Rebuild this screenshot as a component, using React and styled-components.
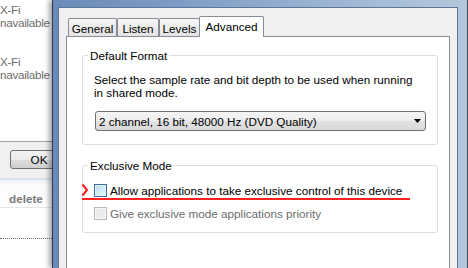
import styled, { createGlobalStyle } from "styled-components";

const GlobalStyle = createGlobalStyle`
  html, body {
    margin: 0;
    padding: 0;
    background: #fff;
  }
  body {
    font-family: "Segoe UI", "Liberation Sans", Arial, sans-serif;
    font-size: 11.7px;
    color: #000;
  }
`;

const Screen = styled.div`
  width: 468px;
  height: 268px;
  overflow: hidden;
  display: flex;
`;

// the window that sits behind the dialog, only a strip of it shows
const BackWindow = styled.div`
  width: 52px;
  flex: none;
  display: flex;
  flex-direction: column;
  background: #fff;
  overflow: hidden;
  color: #6d6d6d;
  line-height: 13px;
`;

const DeviceList = styled.div`
  height: 142px;
  box-sizing: border-box;
  padding-top: 3px;
  border-bottom: 1px solid #a0a0a0;
`;

const Device = styled.div`
  height: 52px;
  white-space: nowrap;
  letter-spacing: -0.3px;
`;

const ButtonBar = styled.div`
  height: 38px;
  box-sizing: border-box;
  padding: 8px 0 0 10px;
  background: #f0f0f0;
  border-bottom: 2px solid #d3dfec;
`;

const Button = styled.div`
  width: 58px;
  height: 19px;
  box-sizing: border-box;
  border: 1px solid #707070;
  border-radius: 3px;
  background: linear-gradient(#f2f2f2, #ebebeb 50%, #dddddd 51%, #cfcfcf);
  color: #000;
  display: flex;
  align-items: center;
  justify-content: center;
`;

const HeaderRow = styled.div`
  height: 28px;
  box-sizing: border-box;
  padding: 12px 0 0 9px;
  background: linear-gradient(#eef2f6, #fbfbfb 20%, #fff);
  border-bottom: 1px solid #e6e6e6;
  font-weight: bold;
  color: #7b7b7b;
`;

const DottedRow = styled.div`
  height: 31px;
  box-sizing: border-box;
  border-bottom: 1px dotted #6a6a6a;
`;

// aero glass frame of the dialog
const DialogFrame = styled.div`
  flex: 1;
  display: flex;
  flex-direction: column;
  position: relative;
  z-index: 1;
  padding: 7px 9px 0 5px;
  border-left: 1px solid #2b3a4d;
  border-right: 1px solid #3c4b5e;
  background: linear-gradient(to right, #6a8bb8 0%, #819fc7 35%, #a3bad6 75%, #b5c7dc 100%);
  box-shadow: -3px 0 5px rgba(0, 0, 0, 0.35);
`;

const DialogBody = styled.div`
  flex: 1;
  display: flex;
  flex-direction: column;
  padding: 0 7px;
  background: #f0f0f0;
  border: 1px solid #5d7596;
  border-bottom: none;
`;

const TabStrip = styled.div`
  height: 29px;
  box-sizing: border-box;
  display: flex;
  align-items: flex-end;
  padding-left: 2px;
  margin-bottom: -1px;
  position: relative;
  z-index: 1;
`;

const Tab = styled.div`
  box-sizing: border-box;
  width: ${(p) => p.$w}px;
  height: ${(p) => (p.$active ? 21 : 18)}px;
  margin-bottom: ${(p) => (p.$active ? 0 : 1)}px;
  margin-left: ${(p) => (p.$active ? -1 : 0)}px;
  padding: ${(p) => (p.$active ? "0 0 2px" : "1px 0 0")};
  border: 1px solid #898c95;
  border-bottom: none;
  border-radius: 2px 2px 0 0;
  background: ${(p) =>
    p.$active ? "#fff" : "linear-gradient(#f7f7f7, #ececec 50%, #e4e4e4)"};
  display: flex;
  align-items: center;
  justify-content: center;
  white-space: nowrap;
`;

const TabPanel = styled.div`
  flex: 1;
  background: #fff;
  border: 1px solid #898c95;
  border-bottom: none;
  padding: 0 11px 0 15px;
`;

const Group = styled.fieldset`
  margin: ${(p) => p.$top}px 0 0;
  padding: ${(p) => p.$pad};
  border: 1px solid #d5dfe5;
  border-radius: 3px;
  min-width: 0;
  line-height: 13px;
`;

const GroupTitle = styled.legend`
  padding: 0 2px;
  margin-left: -6px;
  line-height: 13px;
`;

const Hint = styled.div`
  white-space: nowrap;
`;

const Select = styled.div`
  height: 20px;
  box-sizing: border-box;
  margin: 12px 0 0 1px;
  padding: 0 4px 0 3px;
  border: 1px solid #707070;
  border-radius: 3px;
  background: linear-gradient(#f5f5f5, #ededed 50%, #e2e2e2 51%, #d9d9d9);
  display: flex;
  align-items: center;
  justify-content: space-between;
  white-space: nowrap;
`;

const Rows = styled.div`
  display: flex;
  flex-direction: column;
  gap: 10px;
`;

const CheckRow = styled.div`
  position: relative;
  height: 13px;
  display: flex;
  align-items: center;
  gap: 3px;
  white-space: nowrap;
  color: ${(p) => (p.$disabled ? "#6d6d6d" : "#000")};
`;

const Box = styled.span`
  width: 13px;
  height: 13px;
  box-sizing: border-box;
  flex: none;
  border: 1px solid ${(p) => (p.$disabled ? "#b8b8b8" : "#3d6f9e")};
  box-shadow: inset 0 0 0 1px ${(p) => (p.$disabled ? "#f7f7f7" : "#def2fc")};
  background: ${(p) =>
    p.$disabled
      ? "#ececec"
      : "linear-gradient(135deg, #b9dcf3, #d6ecfa 60%, #eaf6fd)"};
`;

// red pen marks drawn on top of the screenshot
const Markup = styled.svg`
  position: absolute;
  left: -13px;
  top: -2px;
  overflow: visible;
  pointer-events: none;
`;

export default function App() {
  return (
    <Screen>
      <GlobalStyle />
      <BackWindow>
        <DeviceList>
          <Device>
            <div>X-Fi</div>
            <div>navailable</div>
          </Device>
          <Device>
            <div>X-Fi</div>
            <div>navailable</div>
          </Device>
        </DeviceList>
        <ButtonBar>
          <Button>OK</Button>
        </ButtonBar>
        <HeaderRow>delete</HeaderRow>
        <DottedRow />
      </BackWindow>

      <DialogFrame>
        <DialogBody>
          <TabStrip>
            <Tab $w={49}>General</Tab>
            <Tab $w={42}>Listen</Tab>
            <Tab $w={41}>Levels</Tab>
            <Tab $w={65} $active>
              Advanced
            </Tab>
          </TabStrip>
          <TabPanel>
            <Group $top={12} $pad="11px 11px 13px">
              <GroupTitle>Default Format</GroupTitle>
              <Hint>
                Select the sample rate and bit depth to be used when running
                <br />
                in shared mode.
              </Hint>
              <Select>
                <span>2 channel, 16 bit, 48000 Hz (DVD Quality)</span>
                <svg width="7" height="4" viewBox="0 0 7 4">
                  <polygon points="0,0 7,0 3.5,4" fill="#000" />
                </svg>
              </Select>
            </Group>
            <Group $top={14} $pad="12px 11px 12px">
              <GroupTitle>Exclusive Mode</GroupTitle>
              <Rows>
                <CheckRow>
                  <Markup width="330" height="20">
                    <polyline
                      points="1.5,2.5 6,8 1.5,13.5"
                      fill="none"
                      stroke="#ff2020"
                      strokeWidth="2"
                      strokeLinejoin="round"
                    />
                    <line x1="1" y1="17" x2="329" y2="17" stroke="#ff2020" strokeWidth="2" />
                  </Markup>
                  <Box />
                  Allow applications to take exclusive control of this device
                </CheckRow>
                <CheckRow $disabled>
                  <Box $disabled />
                  Give exclusive mode applications priority
                </CheckRow>
              </Rows>
            </Group>
          </TabPanel>
        </DialogBody>
      </DialogFrame>
    </Screen>
  );
}
